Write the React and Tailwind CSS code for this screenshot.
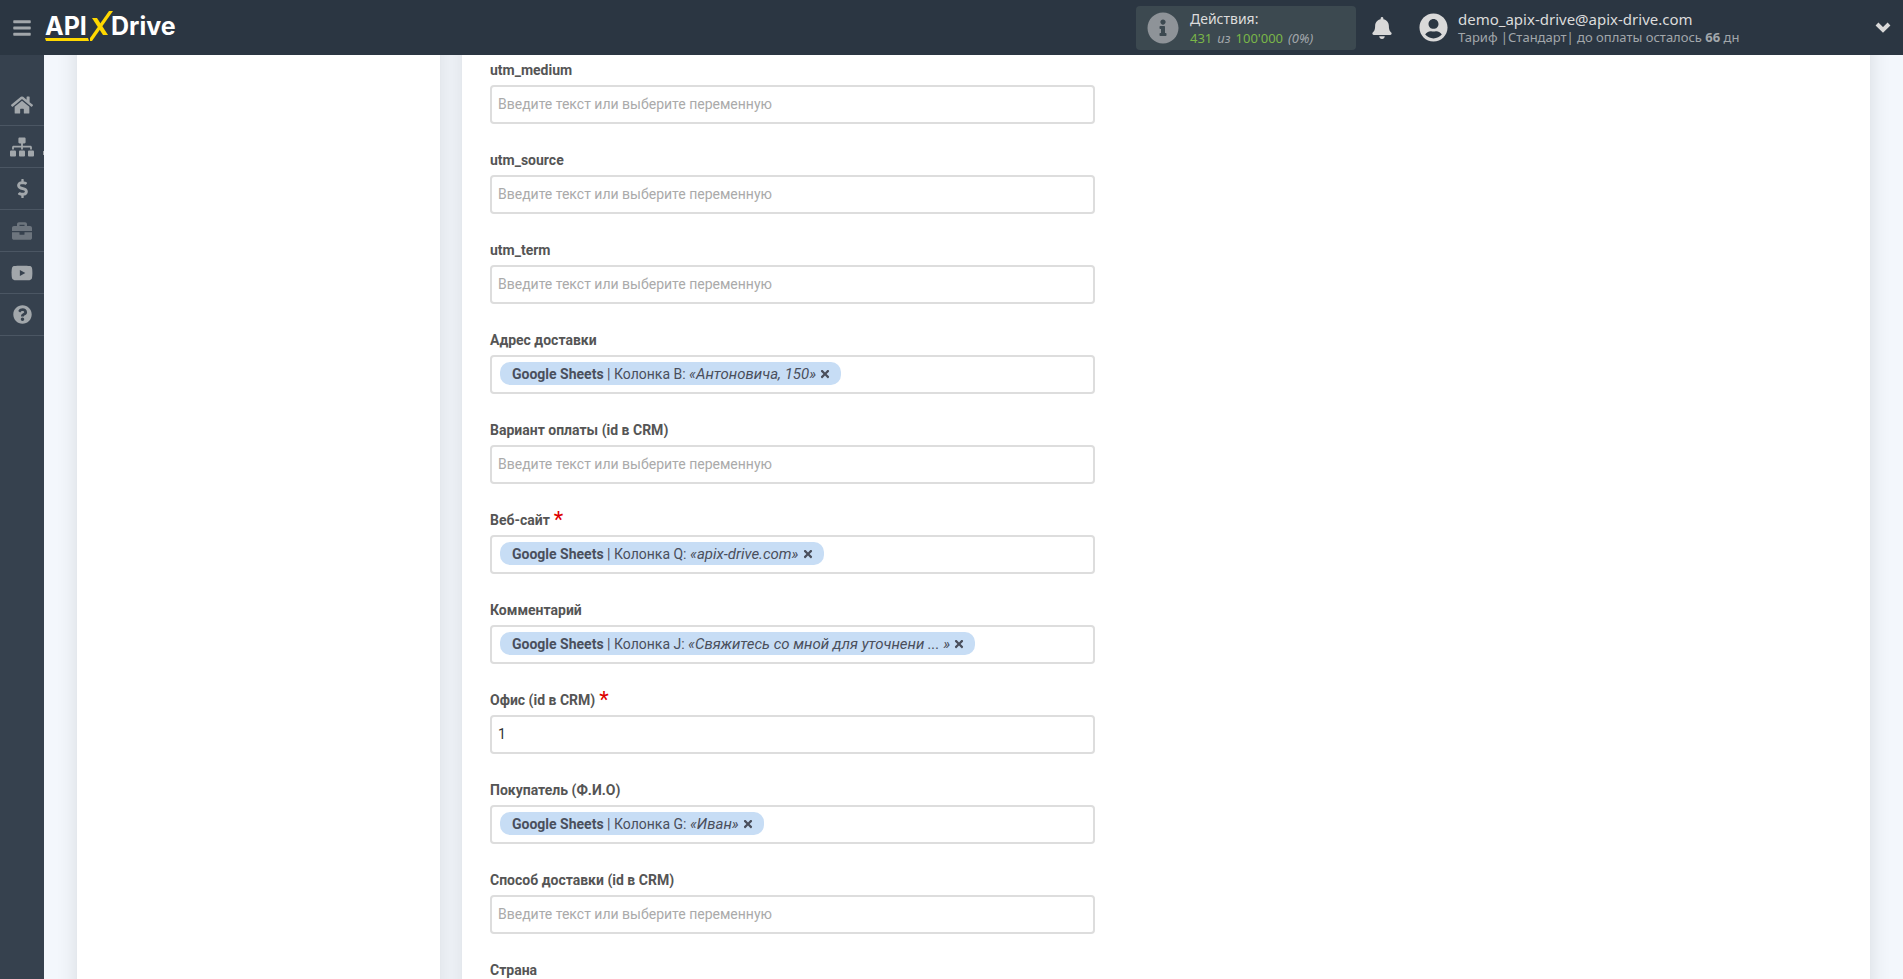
import {
  FaBars,
  FaBell,
  FaBriefcase,
  FaDollarSign,
  FaHome,
  FaInfoCircle,
  FaQuestionCircle,
  FaSitemap,
  FaTimes,
  FaUserCircle,
  FaYoutube,
} from "react-icons/fa";

const menu = [
  { title: "Главная", icon: <FaHome size={22} /> },
  { title: "Связи", icon: <FaSitemap size={24} />, more: true },
  { title: "Оплата", icon: <FaDollarSign size={19} /> },
  { title: "Бизнес", icon: <FaBriefcase size={20} />, dim: true },
  { title: "Видео", icon: <FaYoutube size={22} /> },
  { title: "Помощь", icon: <FaQuestionCircle size={19} /> },
];

const fields = [
  { id: "utm_medium", label: "utm_medium" },
  { id: "utm_source", label: "utm_source" },
  { id: "utm_term", label: "utm_term" },
  { id: "address", label: "Адрес доставки", column: "B", sample: "«Антоновича, 150»" },
  { id: "payment", label: "Вариант оплаты (id в CRM)" },
  { id: "site", label: "Веб-сайт", required: true, column: "Q", sample: "«apix-drive.com»" },
  { id: "comment", label: "Комментарий", column: "J", sample: "«Свяжитесь со мной для уточнени ... »" },
  { id: "office", label: "Офис (id в CRM)", required: true, value: "1" },
  { id: "buyer", label: "Покупатель (Ф.И.О)", column: "G", sample: "«Иван»" },
  { id: "delivery", label: "Способ доставки (id в CRM)" },
  { id: "country", label: "Страна" },
];

function Logo() {
  return (
    <svg width="136" height="34" viewBox="0 0 136 34" role="img" aria-label="APIXDrive">
      <g fill="#fff" fontFamily="Inter, sans-serif" fontWeight="700" fontSize="25">
        <text x="0" y="26">API</text>
        <text x="66" y="26">Drive</text>
      </g>
      <path d="M0 29H43L44 32H1Z" fill="#ffd800" />
      <path d="M64 2H68L47 32H45V29Z" fill="#ffd800" />
      <path d="M47 9H52L63 26H58Z" fill="#ffd800" />
    </svg>
  );
}

function Header() {
  return (
    <header className="flex h-[55px] shrink-0 items-center bg-[#2b3642] px-3 font-['Noto_Sans',sans-serif]">
      <button type="button" aria-label="Меню" className="w-[33px] text-[#a2a7ab]">
        <FaBars size={20} />
      </button>
      <a href="#" className="mb-[3px]">
        <Logo />
      </a>

      <div className="ml-auto flex h-11 w-[220px] items-center gap-[11px] rounded bg-[#3c4950] pl-[11px]">
        <FaInfoCircle size={32} className="text-[#8e9398]" />
        <div className="leading-[18px]">
          <div className="text-sm text-[#dcdcdc]">Действия:</div>
          <div className="flex gap-[5px] text-[13px] text-[#7ab648]">
            <span>431</span>
            <i className="text-[#a2a7ab]">из</i>
            <span>100'000</span>
            <i className="text-[#a2a7ab]">(0%)</i>
          </div>
        </div>
      </div>

      <button type="button" aria-label="Уведомления" className="ml-[15px] text-[#d9d9d9]">
        <FaBell size={22} />
      </button>

      <button
        type="button"
        className="ml-[26px] flex w-[472px] items-center text-left"
      >
        <FaUserCircle size={29} className="text-[#d9d9d9]" />
        <div className="ml-[10px] leading-[18px]">
          <div className="text-[15px] text-[#dcdcdc]">demo_apix-drive@apix-drive.com</div>
          <div className="text-[13px] text-[#a2a7ab]">
            Тариф |Стандарт| до оплаты осталось <b>66</b> дн
          </div>
        </div>
        <svg width="16" height="12" viewBox="0 0 16 12" className="ml-auto">
          <path d="M2 2L8 8L14 2" fill="none" stroke="#d9d9d9" strokeWidth="4" />
        </svg>
      </button>
    </header>
  );
}

function Sidebar() {
  return (
    <nav className="w-11 shrink-0 bg-[#36414e] pt-[29px]">
      {menu.map(({ title, icon, dim, more }) => (
        <a
          key={title}
          href="#"
          title={title}
          className={
            "relative flex h-[42px] items-center justify-center border-b border-[#4b5663] " +
            (dim ? "text-[#6d757e]" : "text-[#a2a7ab]")
          }
        >
          {icon}
          {more && <span className="absolute right-0 bottom-3 h-1 w-px bg-[#a2a7ab]" />}
        </a>
      ))}
    </nav>
  );
}

function Field({ id, label, required, column, sample, value }) {
  return (
    <div className="mb-[26px]">
      <label htmlFor={id} className="flex h-5 text-sm leading-5 font-bold text-[#555]">
        {label}
        {required && (
          <span className="ml-1 text-[22px] leading-5 font-normal text-[#d00]">*</span>
        )}
      </label>
      <div className="mt-[5px] flex h-[39px] items-start rounded border-2 border-[#ddd] bg-white">
        {column && (
          <div className="mt-[5px] ml-2 flex h-[23px] shrink-0 items-center gap-[3px] rounded-[10px] bg-[#c7ddf5] pr-[10px] pl-3 text-sm whitespace-nowrap text-[#4a4f5c]">
            <span>
              <b>Google Sheets</b> | Колонка {column}:{" "}
              <i className="text-[15px] leading-5">{sample}</i>
            </span>
            <button type="button" aria-label="Удалить">
              <FaTimes size={12} />
            </button>
          </div>
        )}
        <input
          id={id}
          type="text"
          defaultValue={value}
          placeholder={column ? "" : "Введите текст или выберите переменную"}
          className="h-[33px] min-w-0 flex-1 px-[6px] text-sm text-[#333] outline-none placeholder:text-[#aaa]"
        />
      </div>
    </div>
  );
}

export default function App() {
  return (
    <div className="flex h-screen flex-col overflow-hidden font-[Roboto,sans-serif]">
      <Header />
      <div className="flex min-h-0 flex-1">
        <Sidebar />
        {/* panels run past the top and bottom edges, as scrolled content */}
        <main className="flex min-w-0 flex-1 gap-[22px] overflow-hidden bg-[#f3f7fc] px-[33px]">
          <aside className="-my-8 w-[363px] shrink-0 bg-white shadow-[0_0_20px_rgba(0,0,0,0.12)]" />
          <section className="-my-8 min-w-0 flex-1 bg-white px-7 pt-[37px] shadow-[0_0_20px_rgba(0,0,0,0.12)]">
            <form className="max-w-[605px]">
              {fields.map((field) => (
                <Field key={field.id} {...field} />
              ))}
            </form>
          </section>
        </main>
      </div>
    </div>
  );
}
